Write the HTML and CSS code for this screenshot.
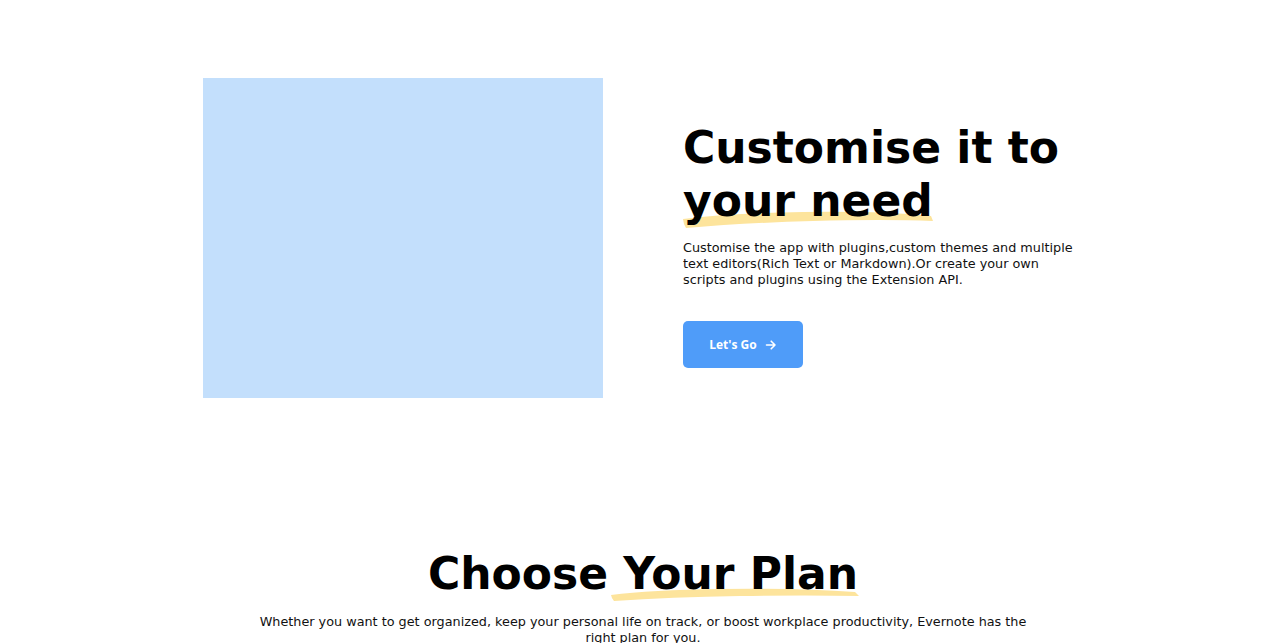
FILE: index.html
```html
<!DOCTYPE html>
<html>
<head>
<meta charset="utf-8">
<link rel="stylesheet" href="styles.css">
</head>
<body>
<section class="feature">
  <div class="feature-media"></div>
  <div class="feature-text">
    <h2 class="feature-title">Customise it to <span class="mark">your need<svg class="brush brush-need" viewBox="0 0 250 18" preserveAspectRatio="none"><path d="M0 9 Q 50 3 120 2 Q 200 1 248 6 L 250 11 Q 200 9 130 11 Q 60 13 3 18 L 1 14 Z" fill="#fde49c"/></svg></span></h2>
    <p class="feature-desc">Customise the app with plugins,custom themes and multiple text editors(Rich Text or Markdown).Or create your own scripts and plugins using the Extension API.</p>
    <a class="btn" href="#">Let's Go <svg class="arrow" viewBox="0 0 12 12" width="12" height="12"><path d="M1.5 6 H10 M6.2 2.2 L10 6 L6.2 9.8" fill="none" stroke="#fff" stroke-width="1.6" stroke-linecap="round" stroke-linejoin="round"/></svg></a>
  </div>
</section>
<section class="plans">
  <h2 class="plans-title">Choose <span class="mark">Your Plan<svg class="brush brush-plan" viewBox="0 0 250 14" preserveAspectRatio="none"><path d="M0 8 Q 40 3 110 2 Q 190 1 246 5 L 250 9 Q 200 8 130 9 Q 60 10 3 14 L 1 11 Z" fill="#fde49c"/></svg></span></h2>
  <p class="plans-desc">Whether you want to get organized, keep your personal life on track, or boost workplace productivity, Evernote has the right plan for you.</p>
</section>
</body>
</html>
```
FILE: styles.css
```css
html, body { margin: 0; padding: 0; background: #fff; }
body { font-family: "DejaVu Sans", sans-serif; color: #000; }

.feature {
  display: flex;
  align-items: flex-start;
  justify-content: center;
  gap: 80px;
  padding-top: 78px;
}
.feature-media {
  width: 400px;
  height: 320px;
  background: #c3dffc;
  flex: none;
}
.feature-text {
  width: 393px;
  padding-top: 44px;
}
.feature-title, .plans-title {
  margin: 0;
  font-size: 44px;
  line-height: 52.8px;
  font-weight: 700;
  color: #000;
}
.mark {
  position: relative;
  display: inline-block;
  z-index: 0;
}
.brush {
  position: absolute;
  z-index: -1;
}
.brush-need {
  left: 0;
  top: 35px;
  width: 250px;
  height: 18px;
}
.brush-plan {
  left: -12px;
  top: 39px;
  width: 248px;
  height: 14px;
}
.feature-desc {
  margin: 12px 0 0;
  font-size: 12.8px;
  line-height: 16px;
  color: #111;
}
.btn {
  display: inline-flex;
  align-items: center;
  justify-content: center;
  gap: 8px;
  margin-top: 33px;
  width: 120px;
  height: 47px;
  box-sizing: border-box;
  padding-top: 1px;
  background: #4f9cf9;
  border-radius: 5px;
  color: #fff;
  text-decoration: none;
  font-family: "Open Sans", sans-serif;
  font-weight: 700;
  font-size: 12px;
}
.arrow { display: block; }

.plans {
  text-align: center;
  padding-top: 150px;
  padding-left: 7px;
}
.plans-desc {
  margin: 13px auto 0;
  width: 780px;
  font-size: 12.8px;
  line-height: 16px;
  color: #111;
}
```
